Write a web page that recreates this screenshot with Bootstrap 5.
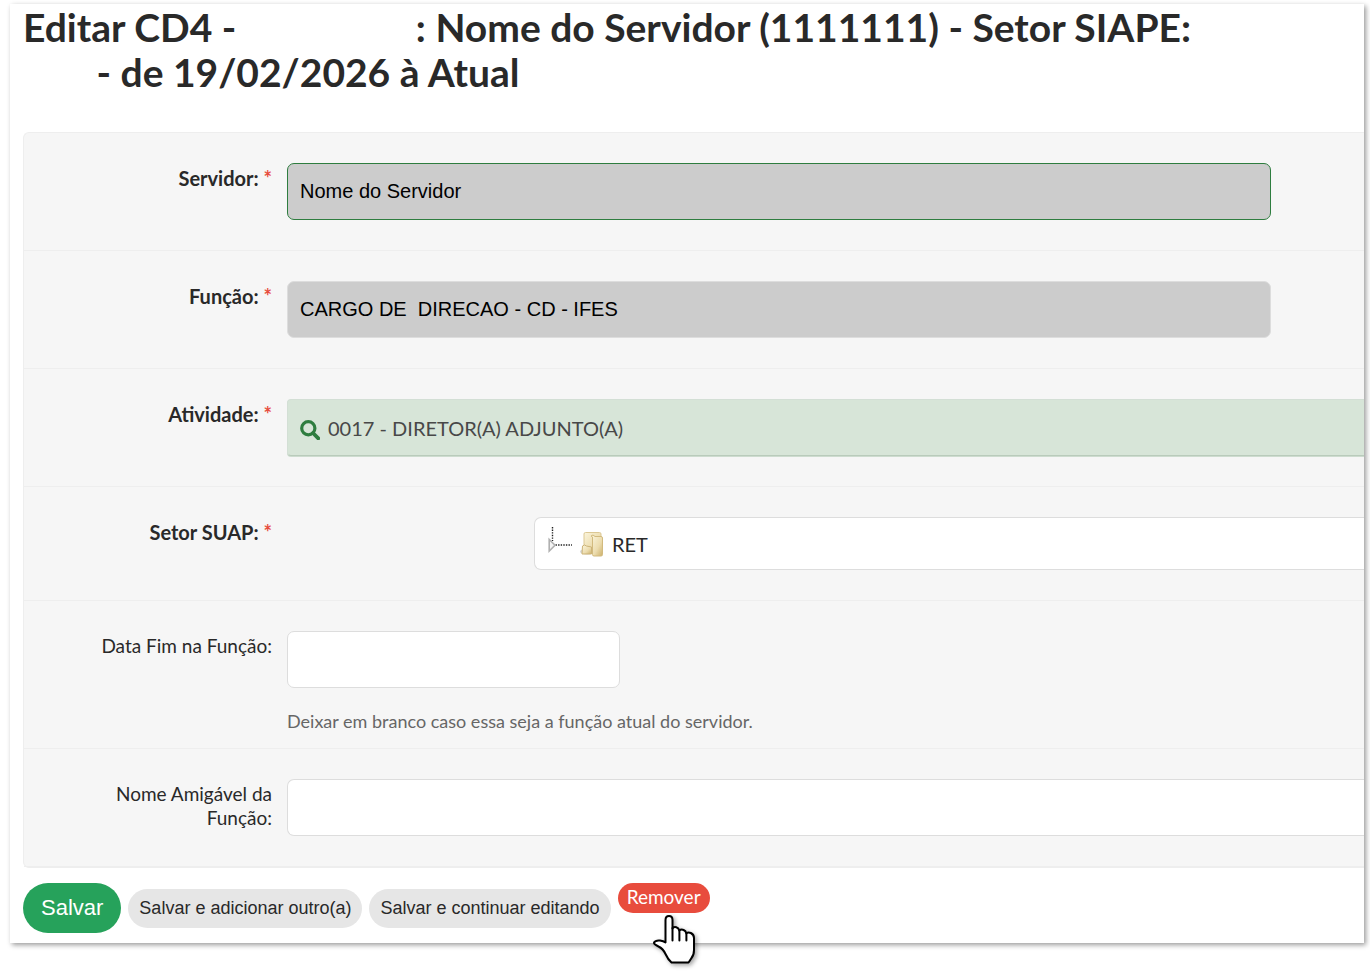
<!DOCTYPE html>
<html lang="pt-BR">
<head>
<meta charset="utf-8">
<meta name="viewport" content="width=device-width, initial-scale=1">
<title>Editar Função do Servidor</title>
<link href="https://cdn.jsdelivr.net/npm/bootstrap@5.3.0/dist/css/bootstrap.min.css" rel="stylesheet">
<style>
body { font-family: Lato, sans-serif; color: #292929; font-size: 20px; line-height: 24px; background: #fff; }
.page-panel { margin: 4px 6px 28px 10px; padding: 1px 0 10px 13px; background: #fff; box-shadow: 2px 2px 5px rgba(0,0,0,.4); }
.page-title { font-size: 39px; line-height: 45px; font-weight: 700; margin-bottom: 37px; }
.blank { display: inline-block; width: 170px; }
.blank-sm { width: 64px; }
.form-block { background: #f6f6f6; border: 1px solid #eee; border-right: 0; border-radius: 6px 0 0 6px; margin-bottom: 15px; }
.form-line { display: flex; padding: 30px 0; border-bottom: 1px solid #eee; }
.form-line.with-help { padding-bottom: 15px; }
.line-label { flex: 0 0 248px; margin-right: 15px; padding: 3px 0 0 60px; text-align: right; font-size: 19px; }
.line-label.required-label { font-weight: 700; font-size: 20px; }
.required-label span { color: #e74c3c; }
.line-field { flex: 1 1 0; min-width: 0; }
.field { display: block; width: 100%; height: 57px; padding: 0 12px; border: 1px solid #ddd; border-radius: 7px; background: #fff; font: 20px/24px "Liberation Sans", Arial, sans-serif; color: #000; }
.field.locked { max-width: 984px; background: #ccc; }
.field.valid { border-color: #2e7d3f; }
.field.date { max-width: 333px; }
.field.open-end { border-right: 0; border-radius: 7px 0 0 7px; }
.picked { height: 57px; padding: 0 12px; border: 1px solid #d3dfd5; border-right: 0; border-bottom-color: #b9cbbb; background: #d7e5d8; border-radius: 4px 0 0 4px; box-shadow: 0 1px #cddccf; color: #484848; }
.tree { height: 53px; margin-left: 247px; padding: 0 13px; border: 1px solid #ddd; border-right: 0; border-radius: 7px 0 0 7px; background: #fff; }
.help { margin-top: 21px; color: #666; font-size: 18px; }
.actions { gap: 7px; }
.btn-save, .btn-alt { border: 0; border-radius: 25px; font-family: "Liberation Sans", Arial, sans-serif; }
.btn-save { height: 50px; padding: 0 18px; background: #26a25b; color: #fff; font-size: 22px; }
.btn-alt { height: 39px; padding: 0 11px; background: #e6e6e6; color: #292929; font-size: 18px; }
.btn-remove { display: block; height: 30px; padding: 0 9px; border-radius: 15px; background: #e84c3d; color: #fff; font-size: 19px; line-height: 28px; text-decoration: none; }
.btn-remove:hover { color: #fff; }
.pointer { position: absolute; left: 34px; top: 30px; filter: drop-shadow(2px 2px 2px rgba(0,0,0,.35)); pointer-events: none; }
</style>
</head>
<body>
<main class="page-panel">
  <h1 class="page-title">Editar CD4 - <span class="blank"></span>: Nome do Servidor (1111111) - Setor SIAPE:<br><span class="blank blank-sm"></span> - de 19/02/2026 à Atual</h1>
  <form>
    <div class="form-block">
      <div class="form-line">
        <label class="line-label required-label" for="servidor">Servidor: <span>*</span></label>
        <div class="line-field"><input class="field locked valid" id="servidor" type="text" value="Nome do Servidor" readonly></div>
      </div>
      <div class="form-line">
        <label class="line-label required-label" for="funcao">Função: <span>*</span></label>
        <div class="line-field"><input class="field locked" id="funcao" type="text" value="CARGO DE  DIRECAO - CD - IFES" readonly></div>
      </div>
      <div class="form-line">
        <div class="line-label required-label">Atividade: <span>*</span></div>
        <div class="line-field"><div class="picked d-flex align-items-center gap-2">
          <svg class="mt-1" width="20" height="20" viewBox="0 0 20 20" fill="none" stroke="#2e7d3f"><circle cx="8.300" cy="8.300" r="6.600" stroke-width="3.200"/><path d="M13 13l5.300 5.300" stroke-width="3.800" stroke-linecap="round"/></svg>
          <span>0017 - DIRETOR(A) ADJUNTO(A)</span></div></div>
      </div>
      <div class="form-line">
        <div class="line-label required-label">Setor SUAP: <span>*</span></div>
        <div class="line-field"><div class="tree d-flex align-items-center">
          <svg class="me-2" width="24" height="34" viewBox="0 0 24 34"><path d="M4.500 0v14M7.500 18h16.500" fill="none" stroke="#222" stroke-width="1.400" stroke-dasharray="1.400 1.200"/><path d="M1.200 12.500v11.500l5.800-5.800z" fill="#f4f4f4" stroke="#b0b0b0" stroke-width="1.600"/></svg>
          <svg class="me-2" width="24" height="26" viewBox="0 0 24 26">
            <defs><linearGradient id="gold" x1="0" y1="0" x2="1" y2="1"><stop offset="0" stop-color="#fbf5dc"/><stop offset=".6" stop-color="#ecdcae"/><stop offset="1" stop-color="#ccb06a"/></linearGradient></defs>
            <ellipse cx="7" cy="20.500" rx="7" ry="3" fill="#bbb" opacity=".6"/>
            <path d="M4 3q0-1.500 1.500-1.500h14q1.500 0 1.500 1.500v18H4z" fill="url(#gold)" stroke="#dcc894"/>
            <path d="M2.500 15q2-2 4 0l5 1v7H2z" fill="url(#gold)" stroke="#cdb478"/>
            <path d="M11 5l2-1 2 1.500h6q1.500 0 1.500 1.500v16.500q0 1.500-1.500 1.500h-7q-1.500 0-1.500-1.500V6z" fill="url(#gold)" stroke="#d2ba7e"/>
          </svg>
          <span>RET</span></div></div>
      </div>
      <div class="form-line with-help">
        <label class="line-label" for="data-fim">Data Fim na Função:</label>
        <div class="line-field"><input class="field date" id="data-fim" type="text"><div class="help">Deixar em branco caso essa seja a função atual do servidor.</div></div>
      </div>
      <div class="form-line">
        <label class="line-label" for="nome-amigavel">Nome Amigável da Função:</label>
        <div class="line-field"><input class="field open-end" id="nome-amigavel" type="text"></div>
      </div>
    </div>
    <div class="actions d-flex flex-wrap align-items-center">
      <button class="btn-save" type="submit">Salvar</button>
      <button class="btn-alt" type="submit">Salvar e adicionar outro(a)</button>
      <button class="btn-alt" type="submit">Salvar e continuar editando</button>
      <div class="position-relative align-self-start">
        <a class="btn-remove" href="#">Remover</a>
        <svg class="pointer" width="46" height="54" viewBox="0 0 46 54"><path d="M13.500 29V7q0-4 3.500-4T20.500 7v8.500q1-2 3.800-1.300 2.500.8 3 3.300 2-1.500 4.300-.5 2.300 1 2.700 3.300 2-1.500 4.500-.3Q42 21.500 42 25v12q0 5-2.500 8-1.500 2.500-3 4.500H19.500Q16 46.500 13.500 41 11 35.500 6.500 33.500 1.500 31 2 29.500 3.500 27 8 27.500q3.500.5 5.500 2z" fill="#fff" stroke="#000" stroke-width="2" stroke-linejoin="round"/><path d="M20.500 15v12.500M27.400 17.500V27.500M34.400 20.500v7" fill="none" stroke="#000" stroke-width="2" stroke-linecap="round"/></svg>
      </div>
    </div>
  </form>
</main>
<script src="https://cdn.jsdelivr.net/npm/bootstrap@5.3.0/dist/js/bootstrap.bundle.min.js"></script>
</body>
</html>
